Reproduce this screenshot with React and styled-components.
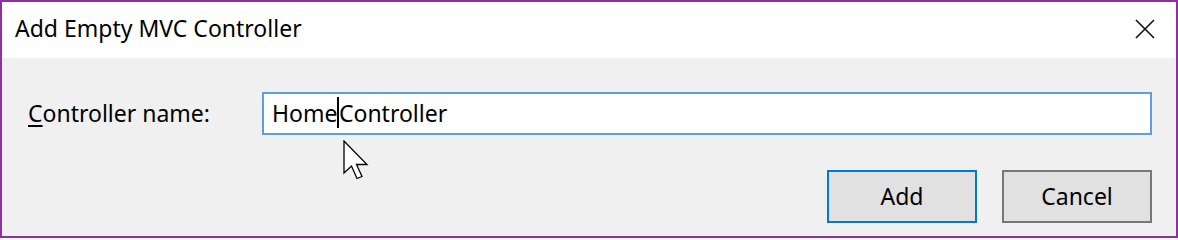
import React from 'react';
import styled, { createGlobalStyle } from 'styled-components';

const GlobalStyle = createGlobalStyle`
  html, body {
    margin: 0;
    padding: 0;
    background: #ffffff;
  }
  * {
    box-sizing: border-box;
  }
`;

function CloseIcon() {
  return (
    <svg width="22" height="22" viewBox="0 0 22 22">
      <path d="M2 2 L20 20 M20 2 L2 20" stroke="#111" strokeWidth="1.6" fill="none" />
    </svg>
  );
}

function Pointer() {
  return (
    <svg width="28" height="42" viewBox="0 0 28 42">
      <path
        d="M1 1 L1 33 L8.5 26 L14 38.5 L19 36.5 L13.5 24.5 L24 24.5 Z"
        fill="#ffffff"
        stroke="#000000"
        strokeWidth="1.3"
        strokeLinejoin="miter"
      />
    </svg>
  );
}

export default function App() {
  return (
    <>
      <GlobalStyle />
      <Window>
        <TitleBar>
          <Title>Add Empty MVC Controller</Title>
          <CloseButton>
            <CloseIcon />
          </CloseButton>
        </TitleBar>
        <Body>
          <FieldRow>
            <Label>
              <u>C</u>ontroller name:
            </Label>
            <TextBox>
              Home
              <Caret />
              Controller
              <PointerWrap>
                <Pointer />
              </PointerWrap>
            </TextBox>
          </FieldRow>
          <ButtonRow>
            <Button primary>Add</Button>
            <Button>Cancel</Button>
          </ButtonRow>
        </Body>
      </Window>
    </>
  );
}

const Window = styled.div`
  width: 1178px;
  height: 238px;
  border: 2px solid #902f9f;
  display: flex;
  flex-direction: column;
  font-family: 'Noto Sans', 'Open Sans', sans-serif;
  color: #000;
`;

const TitleBar = styled.div`
  height: 56px;
  background: #ffffff;
  display: flex;
  align-items: center;
  justify-content: space-between;
  padding: 0 20px 0 13px;
`;

const Title = styled.div`
  font-size: 23px;
  padding-bottom: 4px;
`;

const CloseButton = styled.div`
  display: flex;
  align-items: center;
  padding-bottom: 2px;
`;

const Body = styled.div`
  flex: 1;
  background: #f0f0f0;
  padding: 34px 24px 13px 24px;
  display: flex;
  flex-direction: column;
  justify-content: space-between;
`;

const FieldRow = styled.div`
  display: grid;
  grid-template-columns: 236px 1fr;
  align-items: center;
`;

const Label = styled.div`
  font-size: 23px;
  padding-left: 2px;
  padding-bottom: 2px;

  u {
    text-underline-offset: 3px;
    text-decoration-thickness: 1.5px;
  }
`;

const TextBox = styled.div`
  position: relative;
  height: 43px;
  background: #ffffff;
  border: 2px solid #5a9fe3;
  display: flex;
  align-items: center;
  padding: 0 8px 2px 8px;
  font-size: 23px;
`;

const Caret = styled.span`
  display: inline-block;
  width: 1.5px;
  height: 31px;
  background: #000;
`;

const PointerWrap = styled.div`
  position: absolute;
  left: 79px;
  top: 46px;
  line-height: 0;
`;

const ButtonRow = styled.div`
  display: flex;
  justify-content: flex-end;
  gap: 25px;
`;

const Button = styled.div`
  width: 150px;
  height: 53px;
  background: #e1e1e1;
  border: 2px solid ${(p) => (p.primary ? '#0078d7' : '#777777')};
  display: flex;
  align-items: center;
  justify-content: center;
  font-size: 23px;
  padding-bottom: 2px;
`;
